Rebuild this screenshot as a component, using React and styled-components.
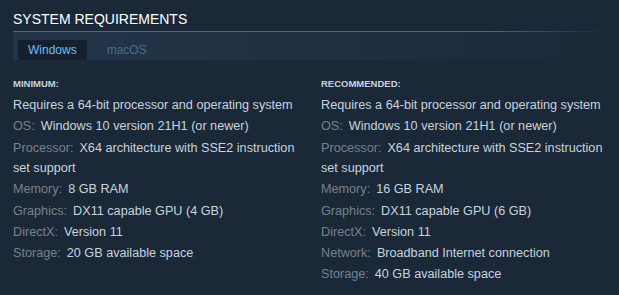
import React from "react";
import styled, { createGlobalStyle } from "styled-components";

const Global = createGlobalStyle`
  html, body { margin: 0; padding: 0; background: #1b2838; }
  body { font-family: "Liberation Sans", Arial, sans-serif; }
`;

const Page = styled.div`
  width: 619px;
  height: 295px;
  background: #1b2838;
  padding: 0 13px;
  box-sizing: border-box;
  overflow: hidden;
`;

const Heading = styled.h2`
  margin: 0;
  padding-top: 10px;
  height: 21px;
  font-size: 14px;
  font-weight: normal;
  letter-spacing: 0;
  color: #ffffff;
  text-transform: uppercase;
  line-height: 18px;
  border-bottom: 1px solid transparent;
  border-image: linear-gradient(to right, #3d6c8d 0%, #3d6c8d 80%, rgba(61,108,141,0) 100%) 1;
`;

const Tabs = styled.div`
  display: flex;
  gap: 10px;
  padding: 8px 0 0 5px;
  height: 20px;
  margin-right: 6px;
  background: linear-gradient(to right, rgba(40,62,84,0.6) 0%, rgba(35,55,75,0.5) 60%, rgba(27,40,56,0) 100%);
`;

const Tab = styled.div`
  padding: 0 10px;
  height: 20px;
  line-height: 20px;
  font-size: 12px;
  color: ${(p) => (p.$active ? "#67c1f5" : "#4b6d88")};
  background: ${(p) => (p.$active ? "#16202d" : "transparent")};
`;

const Columns = styled.div`
  display: grid;
  grid-template-columns: 296px 296px;
  column-gap: 12px;
  padding-top: 17px;
`;

const Col = styled.div``;

const Title = styled.div`
  font-size: 9.5px;
  font-weight: bold;
  color: #c6d4df;
  text-transform: uppercase;
  line-height: 14px;
  margin-bottom: 4px;
`;

const List = styled.ul`
  list-style: none;
  margin: 0;
  padding: 0;
`;

const Item = styled.li`
  font-size: 12.65px;
  line-height: 20.5px;
  margin-bottom: 0.75px;
  color: #c6d4df;
`;

const Label = styled.span`
  color: #76828e;
  margin-right: 6px;
`;

const minimum = [
  [null, "Requires a 64-bit processor and operating system"],
  ["OS:", "Windows 10 version 21H1 (or newer)"],
  ["Processor:", "X64 architecture with SSE2 instruction set support"],
  ["Memory:", "8 GB RAM"],
  ["Graphics:", "DX11 capable GPU (4 GB)"],
  ["DirectX:", "Version 11"],
  ["Storage:", "20 GB available space"],
];

const recommended = [
  [null, "Requires a 64-bit processor and operating system"],
  ["OS:", "Windows 10 version 21H1 (or newer)"],
  ["Processor:", "X64 architecture with SSE2 instruction set support"],
  ["Memory:", "16 GB RAM"],
  ["Graphics:", "DX11 capable GPU (6 GB)"],
  ["DirectX:", "Version 11"],
  ["Network:", "Broadband Internet connection"],
  ["Storage:", "40 GB available space"],
];

function Req({ title, rows }) {
  return (
    <Col>
      <Title>{title}</Title>
      <List>
        {rows.map(([l, v], i) => (
          <Item key={i}>
            {l && <Label>{l}</Label>}
            {v}
          </Item>
        ))}
      </List>
    </Col>
  );
}

export default function App() {
  return (
    <Page>
      <Global />
      <Heading>System Requirements</Heading>
      <Tabs>
        <Tab $active>Windows</Tab>
        <Tab>macOS</Tab>
      </Tabs>
      <Columns>
        <Req title="Minimum:" rows={minimum} />
        <Req title="Recommended:" rows={recommended} />
      </Columns>
    </Page>
  );
}
